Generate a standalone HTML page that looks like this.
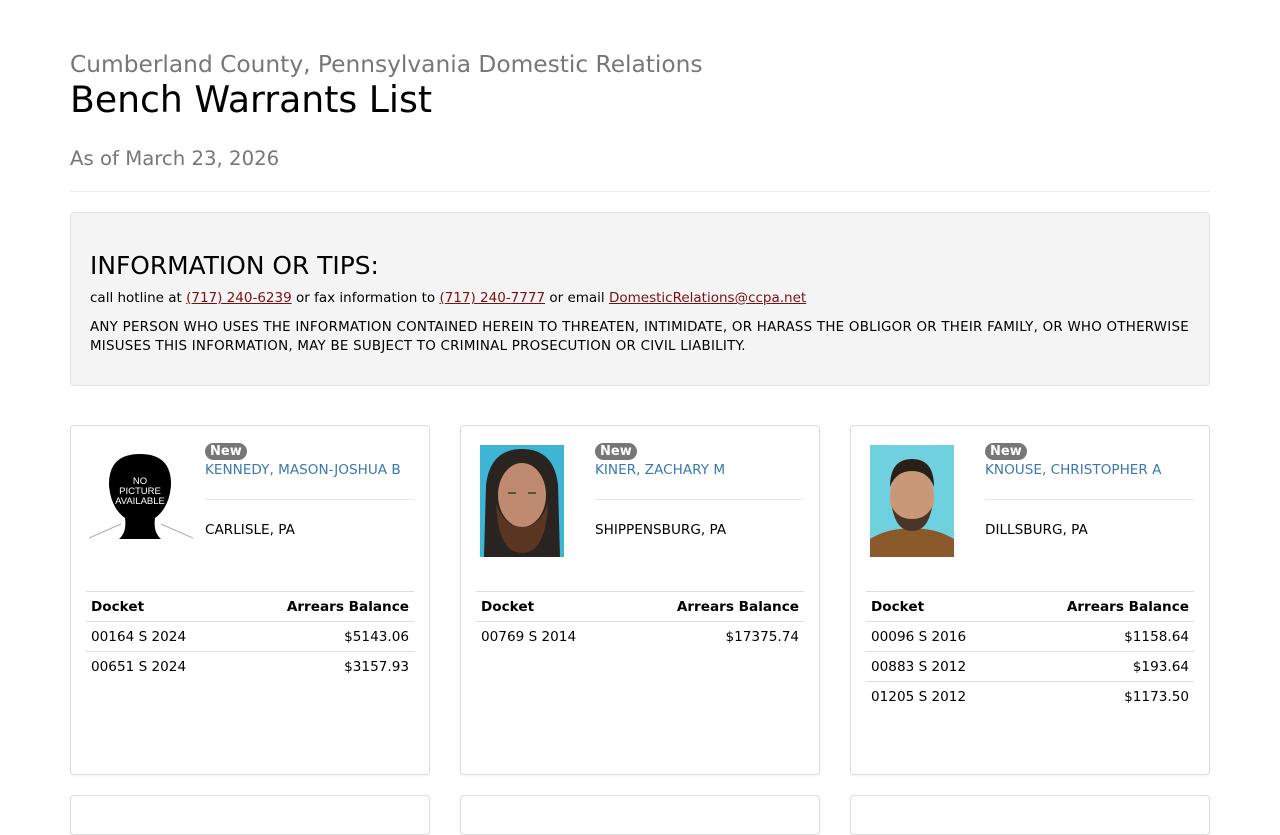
<!DOCTYPE html>
<html><head><meta charset="utf-8"><style>
*{box-sizing:border-box;margin:0;padding:0}
body{width:1280px;height:800px;overflow:hidden;background:#fff;font-family:Verdana,"DejaVu Sans",sans-serif;color:#000;position:relative}
.a{position:absolute;white-space:nowrap}
.sub{left:70px;top:51px;font-size:23.3px;color:#777}
.h1{left:70px;top:78px;font-size:36.2px}
.asof{left:70px;top:147px;font-size:19.7px;color:#777}
.hr{position:absolute;left:70px;width:1140px;top:191px;border-top:1px solid #eee}
.well{position:absolute;left:70px;top:212px;width:1140px;height:174px;background:#f4f4f4;border:1px solid #e3e3e3;border-radius:4px}
.well h2{position:absolute;left:19px;top:38px;font-size:24.9px;font-weight:normal;white-space:nowrap}
.well p{position:absolute;left:19px;font-size:13.5px;line-height:19px;white-space:nowrap}
.well a{color:#7a1010;text-decoration:underline}
.card{position:absolute;top:425px;width:360px;height:350px;border:1px solid #ddd;border-radius:4px;background:#fff;box-shadow:0 1px 2px rgba(0,0,0,.05)}
.card2{top:795px;height:40px}
.photo{position:absolute;left:19px;top:19px;width:84px;height:112px}
.badge{position:absolute;left:134px;top:17px;background:#777;color:#fff;font-weight:bold;font-size:13px;padding:0 5px;height:17px;line-height:17px;border-radius:9px}
.name{position:absolute;left:134px;top:36px;font-size:13.6px;color:#3a78b0}
.sep{position:absolute;left:134px;width:209px;top:73px;border-top:1px solid #e8e8e8}
.city{position:absolute;left:134px;top:96px;font-size:13.6px}
table{position:absolute;left:15px;top:165px;width:328px;border-collapse:collapse;font-size:13.6px}
td,th{height:30px;padding:0 5px;border-top:1px solid #ddd;text-align:left}
th{font-weight:bold}
.r{text-align:right}
</style></head><body>
<div class="a sub">Cumberland County, Pennsylvania Domestic Relations</div>
<div class="a h1">Bench Warrants List</div>
<div class="a asof">As of March 23, 2026</div>
<div class="hr"></div>
<div class="well">
<h2>INFORMATION OR TIPS:</h2>
<p style="top:76px">call hotline at <a>(717) 240-6239</a> or fax information to <a>(717) 240-7777</a> or email <a>DomesticRelations@ccpa.net</a></p>
<p style="top:105px;font-size:13.4px;letter-spacing:0.25px">ANY PERSON WHO USES THE INFORMATION CONTAINED HEREIN TO THREATEN, INTIMIDATE, OR HARASS THE OBLIGOR OR THEIR FAMILY, OR WHO OTHERWISE<br>MISUSES THIS INFORMATION, MAY BE SUBJECT TO CRIMINAL PROSECUTION OR CIVIL LIABILITY.</p>
</div>

<div class="card" style="left:70px">
<svg class="photo" viewBox="0 0 104 112" style="left:18px;top:20px;width:104px"><path d="M0 92 L32 78 M72 78 L104 92" stroke="#aaa" stroke-width="1"/><path d="M30 93 Q38 86 36 72 Q22 62 20 40 Q19 8 51 8 Q83 8 82 40 Q80 62 66 72 Q64 86 72 93 Z" fill="#000"/><g font-size="9.5" fill="#fff" text-anchor="middle" font-family="Liberation Sans,sans-serif"><text x="51" y="38">NO</text><text x="51" y="48">PICTURE</text><text x="51" y="58">AVAILABLE</text></g></svg>
<div class="badge">New</div><div class="a name">KENNEDY, MASON-JOSHUA B</div><div class="sep"></div><div class="a city">CARLISLE, PA</div>
<table><tr><th>Docket</th><th class="r">Arrears Balance</th></tr><tr><td>00164 S 2024</td><td class="r">$5143.06</td></tr><tr><td>00651 S 2024</td><td class="r">$3157.93</td></tr></table>
</div>

<div class="card" style="left:460px">
<svg class="photo" viewBox="0 0 84 112"><rect width="84" height="112" fill="#3fb5d6"/><path d="M4 112 L6 40 Q10 4 42 4 Q74 4 78 40 L80 112Z" fill="#2a2420"/><ellipse cx="42" cy="50" rx="24" ry="32" fill="#c08a70"/><path d="M16 58 Q18 108 42 108 Q66 108 68 58 Q60 82 42 82 Q24 82 16 58Z" fill="#5a3522"/><rect x="28" y="47" width="8" height="2" fill="#553"/><rect x="48" y="47" width="8" height="2" fill="#553"/></svg>
<div class="badge">New</div><div class="a name">KINER, ZACHARY M</div><div class="sep"></div><div class="a city">SHIPPENSBURG, PA</div>
<table><tr><th>Docket</th><th class="r">Arrears Balance</th></tr><tr><td>00769 S 2014</td><td class="r">$17375.74</td></tr></table>
</div>

<div class="card" style="left:850px">
<svg class="photo" viewBox="0 0 84 112"><rect width="84" height="112" fill="#6fd0e0"/><path d="M0 112 L0 94 Q20 82 42 84 Q64 82 84 94 L84 112Z" fill="#8a5a2a"/><ellipse cx="42" cy="52" rx="22" ry="30" fill="#c89878"/><path d="M20 42 Q20 14 42 14 Q64 14 64 42 Q58 26 42 26 Q26 26 20 42Z" fill="#2a2018"/><path d="M22 62 Q26 86 42 86 Q58 86 62 62 Q56 74 42 74 Q28 74 22 62Z" fill="#4a3526"/></svg>
<div class="badge">New</div><div class="a name">KNOUSE, CHRISTOPHER A</div><div class="sep"></div><div class="a city">DILLSBURG, PA</div>
<table><tr><th>Docket</th><th class="r">Arrears Balance</th></tr><tr><td>00096 S 2016</td><td class="r">$1158.64</td></tr><tr><td>00883 S 2012</td><td class="r">$193.64</td></tr><tr><td>01205 S 2012</td><td class="r">$1173.50</td></tr></table>
</div>

<div class="card card2" style="left:70px"></div>
<div class="card card2" style="left:460px"></div>
<div class="card card2" style="left:850px"></div>
</body></html>
